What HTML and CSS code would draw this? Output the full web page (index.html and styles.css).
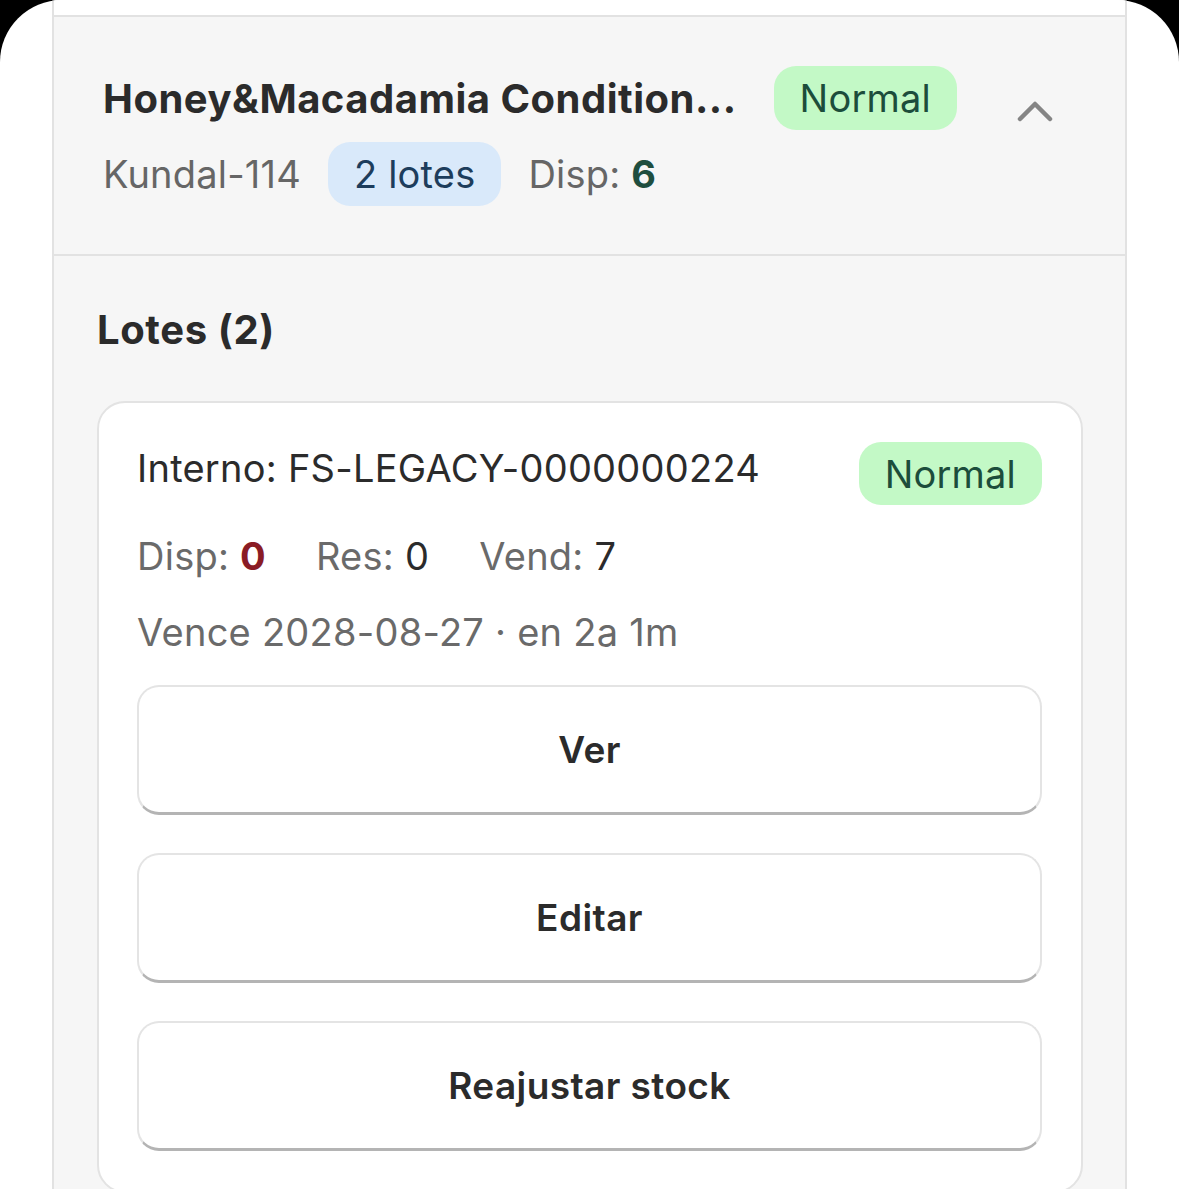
FILE: index.html
```html
<!DOCTYPE html>
<html lang="es">
<head>
<meta charset="utf-8">
<title>Lotes</title>
<link rel="stylesheet" href="styles.css">
</head>
<body>
<div class="screen">
  <div class="list">
    <div class="item-prev"></div>
    <div class="item">
      <div class="item-header">
        <div class="item-main">
          <div class="title-row">
            <div class="title">Honey&amp;Macadamia Condition...</div>
            <span class="badge badge-green">Normal</span>
          </div>
          <div class="meta-row">
            <span class="meta-sku">Kundal-114</span>
            <span class="badge badge-blue">2 lotes</span>
            <span class="meta-disp">Disp: <b class="val-green">6</b></span>
          </div>
        </div>
        <button class="chevron" aria-label="Contraer">
          <svg width="36" height="22" viewBox="0 0 36 22" fill="none"><path d="M3 18 L18 3 L33 18" stroke="#858585" stroke-width="4.5" stroke-linecap="round" stroke-linejoin="round"/></svg>
        </button>
      </div>
      <div class="lots">
        <h2 class="lots-title">Lotes (2)</h2>
        <div class="lot-card">
          <div class="lot-top">
            <div class="lot-code">Interno: FS-LEGACY-0000000224</div>
            <span class="badge badge-green">Normal</span>
          </div>
          <div class="lot-stats">
            <span>Disp: <b class="val-red">0</b></span>
            <span>Res: <span class="val-dark">0</span></span>
            <span>Vend: <span class="val-dark">7</span></span>
          </div>
          <div class="lot-exp">Vence 2028-08-27 · en 2a 1m</div>
          <div class="lot-actions">
            <button class="btn">Ver</button>
            <button class="btn">Editar</button>
            <button class="btn">Reajustar stock</button>
          </div>
        </div>
      </div>
    </div>
  </div>
</div>
</body>
</html>
```
FILE: styles.css
```css
* { box-sizing: border-box; }
html, body { margin: 0; padding: 0; }
body {
  background: #000;
  font-family: Inter, "Noto Sans", "Liberation Sans", sans-serif;
  color: #2b2b2b;
  height: 1189px;
  overflow: hidden;
}
.screen {
  background: #fff;
  height: 1189px;
  border-radius: 62px 62px 0 0;
  overflow: hidden;
  padding: 0 52px;
}
.list {
  border-left: 2px solid #e2e2e2;
  border-right: 2px solid #e2e2e2;
  min-height: 100%;
  background: #f6f6f6;
}
.item-prev {
  height: 15px;
  background: #fff;
}
.item {
  border-top: 2px solid #e2e2e2;
  background: #f6f6f6;
}
.item-header {
  display: flex;
  align-items: flex-start;
  padding: 49px 72px 48px 49px;
  border-bottom: 2px solid #e2e2e2;
}
.item-main {
  flex: 1;
  min-width: 0;
  display: flex;
  flex-direction: column;
  gap: 12px;
}
.title-row {
  display: flex;
  align-items: center;
  gap: 37px;
}
.title {
  font-size: 40px;
  font-weight: 700;
  letter-spacing: 0.5px;
  color: #2b2b2b;
  white-space: nowrap;
  overflow: hidden;
  text-overflow: ellipsis;
}
.badge {
  display: inline-flex;
  align-items: center;
  height: 64px;
  padding: 0 26px;
  border-radius: 22px;
  font-size: 38px;
  letter-spacing: 0.2px;
  white-space: nowrap;
}
.badge-green {
  background: #c3f9c6;
  color: #1c4d3b;
}
.badge-blue {
  background: #d9e9fa;
  color: #1d3d5c;
}
.meta-row {
  display: flex;
  align-items: center;
  gap: 27px;
  font-size: 38px;
  letter-spacing: 0.2px;
  color: #666;
}
.val-green { color: #1f4e3f; font-weight: 700; }
.val-red { color: #8a1c25; font-weight: 700; }
.val-dark { color: #2b2b2b; }
.chevron {
  border: 0;
  background: none;
  padding: 0;
  margin-top: 35px;
  width: 36px;
  height: 22px;
  display: block;
}
.chevron svg { display: block; }
.lots {
  padding: 51px 42px 0 43px;
}
.lots-title {
  margin: 0 0 48px;
  font-size: 40px;
  line-height: 46px;
  font-weight: 700;
  letter-spacing: 0.6px;
  color: #2b2b2b;
}
.lot-card {
  background: #fff;
  border: 2px solid #e3e3e3;
  border-radius: 28px;
  padding: 39px 39px 40px 38px;
}
.lot-top {
  display: flex;
  align-items: flex-start;
  justify-content: space-between;
}
.lot-code {
  font-size: 38px;
  line-height: 52px;
  letter-spacing: 0.25px;
  color: #2b2b2b;
}
.lot-top .badge { height: 63px; }
.lot-stats {
  display: flex;
  gap: 50px;
  margin-top: 25px;
  font-size: 38px;
  line-height: 52px;
  letter-spacing: 0.25px;
  color: #6a6a6a;
}
.lot-exp {
  margin-top: 24px;
  font-size: 38px;
  line-height: 52px;
  letter-spacing: 0.25px;
  color: #6a6a6a;
}
.lot-actions {
  margin-top: 27px;
  display: flex;
  flex-direction: column;
  gap: 38px;
}
.btn {
  height: 130px;
  background: #fff;
  border: 2px solid #e4e4e4;
  border-bottom: 3px solid #b4b4b4;
  border-radius: 22px;
  font-family: inherit;
  font-size: 37px;
  font-weight: 600;
  letter-spacing: 0.4px;
  color: #2b2b2b;
}
```
